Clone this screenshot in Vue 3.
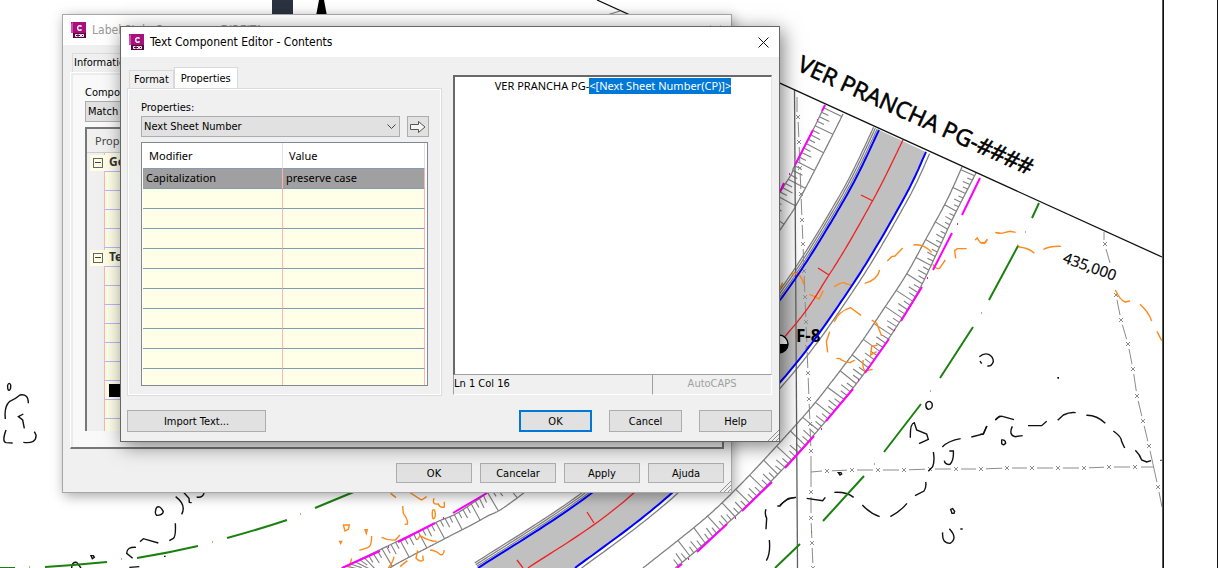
<script setup>
import { onMounted, ref } from 'vue'

/* ---------- drawing geometry ---------- */
function smooth(points, steps = 24) {
  const first = points[0]
  const last = points[points.length - 1]
  const all = [first, ...points, last]
  const out = []
  for (let i = 1; i < all.length - 2; i++) {
    const [a, b, c, d] = [all[i - 1], all[i], all[i + 1], all[i + 2]]
    for (let k = 0; k < steps; k++) {
      const t = k / steps
      out.push([0, 1].map((n) =>
        0.5 * (2 * b[n] + (c[n] - a[n]) * t + (2 * a[n] - 5 * b[n] + 4 * c[n] - d[n]) * t * t +
          (3 * b[n] - a[n] - 3 * c[n] + d[n]) * t * t * t)))
    }
  }
  out.push(last)
  return out
}
const toPath = (pts) => 'M' + pts.map((p) => p[0].toFixed(1) + ' ' + p[1].toFixed(1)).join('L')
function offset(pts, dist) {
  return pts.map((p, i) => {
    const a = pts[Math.max(0, i - 1)]
    const b = pts[Math.min(pts.length - 1, i + 1)]
    const len = Math.hypot(b[0] - a[0], b[1] - a[1]) || 1
    return [p[0] - ((b[1] - a[1]) / len) * dist, p[1] + ((b[0] - a[0]) / len) * dist]
  })
}
function ticks(base, other, start, step, group) {
  let d = ''
  let walked = 0
  let next = start
  let n = 0
  for (let i = 1; i < base.length; i++) {
    const [a, b] = [base[i - 1], base[i]]
    const len = Math.hypot(b[0] - a[0], b[1] - a[1])
    while (len && walked + len >= next) {
      const t = (next - walked) / len
      const p = [a[0] + (b[0] - a[0]) * t, a[1] + (b[1] - a[1]) * t]
      let best = other[0]
      let min = Infinity
      for (const q of other) {
        const r = Math.hypot(q[0] - p[0], q[1] - p[1])
        if (r < min) { min = r; best = q }
      }
      const share = n % group === 0 ? 1 : n % 2 ? 0.38 : 0.55
      d += toPath([p, [p[0] + (best[0] - p[0]) * share, p[1] + (best[1] - p[1]) * share]])
      n++
      next += step
    }
    walked += len
  }
  return d
}

const roadLeft = smooth([[879, 130], [844, 200], [780, 300], [694, 401], [593, 492], [478, 568]])
const roadRight = smooth([[926, 152], [903, 200], [851, 287], [782, 380], [673, 492], [575, 568]])
const roadAxis = smooth([[903, 140], [873, 200], [829, 275], [780, 342], [635, 492], [528, 568]])
const westInner = smooth([[825, 105], [813, 130], [795, 165], [780, 192], [680, 340], [488, 492], [435, 523], [400, 540], [340, 569]], 60)
const westOuter = smooth([[843, 114], [824, 152], [799, 200], [780, 230], [690, 360], [525, 492], [484, 518], [446, 538], [400, 562], [380, 574]], 60)
const eastInner = smooth([[962, 167], [947, 200], [927, 237], [906, 275], [883, 310], [860, 344], [833, 380], [809, 410], [773, 450], [738, 487], [703, 520], [643, 568]], 30)
const eastOuter = smooth([[976, 173], [952, 220], [935, 257], [919, 290], [899, 323], [878, 354], [853, 388], [813, 436], [780, 472], [742, 510], [697, 550], [675, 568]], 30)

const roadFill = toPath([...roadLeft, ...roadRight.slice().reverse()]) + 'Z'
const grayLines = [
  offset(roadLeft, 2), offset(roadLeft, 4), offset(roadLeft, 6), offset(roadRight, -4),
  westInner, westOuter, eastInner, eastOuter,
].map(toPath)
const tickPaths = [ticks(westInner, westOuter, 3, 5, 4), ticks(eastOuter, eastInner, 3, 5, 4)]

const magenta = 'M825 105L822 111M813 130L795 165M784 183L780 192M487 493L453 513M435 523L398 542M380 551L342 568' +
  'M980 178L962 215M952 233L933 270M922 287L901 321M889 339L865 373M853 389L826 421M814 436L785 468M772 482L742 511M727 524L697 552M682 564L677 568' +
  'M957 224h1M927 278h1M894 330h1M858 380h1M821 429h1M817 120h1M789 174h1M443 518h1M735 518h1M688 559h1M388 547h1'
const green = 'M1039 203L1032 218M1018 246L989 300M973 327L940 378M921 404L884 452M864 476L823 521M800 544L775 568' +
  'M0 568L15 568M45 567Q76 565 107 562M137 558Q168 553 198 546M227 538Q257 530 287 520M315 508L356 491'
const greenDots = 'M1025 232h1M981 313h1M930 391h1M874 464h1M811 532h1M29 567h1M121 559h1M212 542h1M300 514h1'

const fences = [
  [[798, 117], [799, 142], [800, 168], [801, 194], [802, 220], [803, 244], [804, 271], [805, 297], [806, 322], [807, 347], [808, 373], [809, 399], [810, 424], [811, 451], [811, 492], [811, 518], [812, 543], [813, 568]],
  [[827, 471], [852, 470], [878, 470], [904, 470], [930, 469], [956, 469], [981, 469], [1007, 468], [1032, 468], [1058, 468], [1084, 468], [1109, 467], [1135, 467]],
  [[1105, 244], [1116, 295], [1121, 320], [1128, 344], [1133, 369], [1137, 396], [1143, 421], [1149, 446], [1158, 487]],
]
let fencePath = 'M797 97V112M811 472L822 471M1104 232V240M1141 467H1154M1159 492L1162 507M1106 249L1110 263'
for (const f of fences) {
  f.forEach(([x, y], i) => {
    fencePath += `M${x - 2} ${y - 2}l4 4M${x + 2} ${y - 2}l-4 4`
    const n = f[i + 1]
    if (n && !(x === 1105)) {
      const len = Math.hypot(n[0] - x, n[1] - y)
      const ux = ((n[0] - x) / len) * 5
      const uy = ((n[1] - y) / len) * 5
      fencePath += `M${x + ux} ${y + uy}L${n[0] - ux} ${n[1] - uy}`
    }
  })
}

/* contour sketches, each tile drawn at three units per pixel */
const sketches = [
  { at: [780, 180], color: 'orange', d: 'M0 325L8 308M32 285Q45 275 58 285Q70 300 72 315M88 343L105 350L117 357L130 332M163 320Q190 302 198 311L216 316M254 310Q292 300 299 270M322 243L335 230L345 228L368 204M400 195Q430 190 455 217M458 253Q475 275 482 260L496 240M527 235L524 212L532 206H560M585 180L592 174Q600 192 612 190L622 178M646 158L660 160M163 425Q175 395 212 383L243 406M149 455L139 485L143 517M275 420L290 430L305 468M169 535L180 536Q190 545 210 548L225 540M292 495L275 500L272 525L290 515M250 540Q245 560 255 573L278 568' },
  { at: [980, 180], color: 'orange', d: 'M0 187L15 189L22 178M46 157L65 160L90 154L107 157M112 194L118 201Q150 205 163 220M190 208Q210 198 243 199M406 330Q420 360 435 366L450 363M480 373Q505 395 515 423M531 454L545 482' },
  { at: [980, 180], color: 'black', d: 'M-2 530Q12 518 26 523Q40 530 40 545Q34 560 22 558M0 543L5 551M233 594h4' },
  { at: [780, 370], color: 'black', d: 'M0 405L25 385L48 382M80 385L128 392L136 382M163 367Q200 365 221 382M247 405Q270 430 299 440M331 440Q360 425 381 400M405 377L432 363Q440 350 437 336M460 246Q465 270 458 290L445 304M487 231Q505 212 542 206M574 201L610 192L621 168M646 150L660 138M438 100Q448 88 456 100Q460 116 445 118Q436 116 438 100M391 203Q390 160 403 158L410 180L440 192L445 208L417 221M508 243L520 243Q522 270 510 283Q495 285 493 272M488 487Q485 520 510 520Q535 505 508 476M512 418l6 -2l6 8l-2 6h-6zM175 308h8l2 4l-5 3zM541 477h7' },
  { at: [980, 370], color: 'black', d: 'M0 193L10 192L20 168M46 150Q58 135 70 140L102 149M97 169Q85 195 105 200L128 197M144 167L185 167L200 154M233 151L250 135Q270 125 287 128M319 136Q350 135 376 160M400 183Q425 200 425 215L434 234M466 241Q480 255 485 270L500 276L513 272M65 210Q76 208 77 220Q70 228 65 221ZM232 23h5M541 271h4' },
  { at: [0, 370], color: 'black', d: 'M23 45Q28 35 32 45Q33 60 27 61Q22 60 23 45M16 147Q12 110 28 95Q45 88 60 75Q85 70 85 100M70 132L55 140L68 150L73 175M18 180Q5 215 18 218L38 219M70 217Q110 222 108 195L103 185M470 412Q480 405 490 425Q488 436 470 436Q462 430 470 412M527 380Q560 405 545 433M550 366L567 385L568 397L575 398M590 381Q610 385 613 366M526 460Q528 500 520 505L508 512M420 515L430 506L475 519M408 532Q380 530 380 550L398 565M273 557h7l3 5l-6 4zM215 594Q215 575 230 577L243 594M388 592L418 590M492 559h5M960 367h5' },
  { at: [0, 370], color: 'orange', d: 'M1172 370L1188 383M1030 465H1048L1045 478L1035 483ZM1095 479h7l-3 11zM1019 514h6l-3 6zM1115 498Q1115 530 1103 533L1078 541M1145 502Q1165 512 1186 510L1200 495M1055 565L1048 592M1165 594Q1180 575 1182 560' },
  { at: [400, 370], color: 'orange', d: 'M28 366Q55 385 65 390L80 380M102 385Q95 405 115 402Q120 415 133 411V395M98 420Q104 415 106 430Q106 448 99 446Q95 435 98 420M8 408L10 430Q25 450 22 462L14 463M52 510L60 497Q90 515 110 514M53 541L48 565Q60 578 70 570L68 557M90 540Q110 542 118 552Q130 560 133 540M0 590L22 572' },
  { at: [400, 370], color: 'black', d: 'M1132 408H1140Q1155 385 1187 382M1098 418Q1093 430 1100 445L1098 478M1108 510Q1112 550 1099 572' },
]

/* ---------- dialog state ---------- */
const property = ref('Next Sheet Number')
const content = ref('VER PRANCHA PG-<[Next Sheet Number(CP)]>')
const editor = ref(null)
const emptyRows = 10
const backRows = [
  { group: 'General' }, {}, {}, {}, {},
  { group: 'Text' }, {}, {}, {}, {}, {}, {}, { swatch: true }, {}, {},
]
onMounted(() => {
  editor.value.focus()
  editor.value.setSelectionRange(15, content.value.length)
})
</script>

<template>
  <main class="workspace">
    <svg class="drawing" viewBox="0 0 1218 568" preserveAspectRatio="xMinYMin slice" aria-hidden="true">
      <rect x="272" y="0" width="21" height="16" fill="#2c3340" />
      <path d="M319 0h5l3 16h-11z" fill="#000" />
      <path :d="roadFill" fill="#c0c0c0" />
      <path v-for="(d, i) in grayLines" :key="'g' + i" :d="d" class="gray" />
      <path v-for="(d, i) in tickPaths" :key="'t' + i" :d="d" class="gray tick" />
      <path d="M794.5 90L797.5 568" class="gray dark" />
      <path :d="fencePath" class="gray fence" />
      <g v-for="(s, i) in sketches" :key="'s' + i" :transform="`translate(${s.at[0]} ${s.at[1]}) scale(0.33333)`">
        <path :d="s.d" class="contour" :class="s.color" />
      </g>
      <path :d="toPath(roadAxis)" class="axis" />
      <path d="M861 195L873 201M818 268L829 275M587 512L594 523M517 560L523 568" class="axis" />
      <circle cx="779" cy="344" r="9" fill="#fff" stroke="#000" stroke-width="1.4" />
      <path d="M779 344h9a9 9 0 0 1-9 9z" fill="#000" />
      <text x="796" y="342" class="map-text bold">F-8</text>
      <path :d="toPath(roadLeft)" class="edge" />
      <path :d="toPath(roadRight)" class="edge" />
      <path :d="magenta" class="magenta" />
      <path :d="green" class="green" />
      <path :d="greenDots" class="green dot" />
      <path d="M597 0L1162 257" class="frame slanted" />
      <path d="M604 16L620 11" class="gray" />
      <path d="M1162.5 0V568" class="frame soft" />
      <path d="M1163.5 0V568M1217.5 0V568" class="frame" />
      <text transform="translate(796 70) rotate(24.4)" class="map-text large">VER PRANCHA PG-####</text>
      <text transform="translate(1062 262) rotate(20)" class="map-text">435,000</text>
    </svg>

    <section class="window back" aria-label="Label Style Composer">
      <header class="titlebar">
        <svg class="app-icon" viewBox="0 0 15 16" aria-hidden="true">
          <path d="M0 0h15v11H0z" fill="#a8117d" /><path d="M0 2l2-2v11H0z" fill="#d14fae" />
          <path d="M2 11h13v5H2z" fill="#5c0443" />
          <path d="M10.600 4.400A2.300 2.300 0 1 0 10.600 7.600" fill="none" stroke="#fff" stroke-width="1.400" />
          <path d="M6.500 12.500h-2v2h2M7.500 12.500h2v2h-2M10.500 12.500h2v2h-2z" fill="none" stroke="#fff" />
        </svg>
        <h2>Label Style Composer - DIREITA</h2>
        <button class="close" aria-label="Close">
          <svg viewBox="0 0 11 11"><path d="M0.500 0.500l10 10M10.500 0.500l-10 10" /></svg>
        </button>
      </header>
      <div class="back-body">
        <div class="back-tabs"><button class="back-tab">Information</button></div>
        <div class="back-panel">
          <label for="component">Component name:</label>
          <select id="component"><option>Match Line</option></select>
          <div class="grid-frame">
            <table class="grid">
              <colgroup><col class="gutter-col" /><col /></colgroup>
              <thead><tr><th colspan="2">Property</th></tr></thead>
              <tbody>
                <tr v-for="(row, i) in backRows" :key="i">
                  <td class="gutter">
                    <button v-if="row.group" class="expander" :aria-label="'Collapse ' + row.group"></button>
                  </td>
                  <td class="name"><b v-if="row.group">{{ row.group }}</b><span v-if="row.swatch" class="swatch"></span></td>
                </tr>
              </tbody>
            </table>
          </div>
        </div>
        <footer class="back-actions">
          <button class="btn">OK</button>
          <button class="btn">Cancelar</button>
          <button class="btn">Apply</button>
          <button class="btn">Ajuda</button>
        </footer>
      </div>
      <svg class="grip" viewBox="0 0 12 12" aria-hidden="true"><path d="M1 12L12 1M5 12L12 5M9 12L12 9" /></svg>
    </section>

    <section class="window front" role="dialog" aria-label="Text Component Editor">
      <header class="titlebar">
        <svg class="app-icon" viewBox="0 0 15 16" aria-hidden="true">
          <path d="M0 0h15v11H0z" fill="#a8117d" /><path d="M0 2l2-2v11H0z" fill="#d14fae" />
          <path d="M2 11h13v5H2z" fill="#5c0443" />
          <path d="M10.600 4.400A2.300 2.300 0 1 0 10.600 7.600" fill="none" stroke="#fff" stroke-width="1.400" />
          <path d="M6.500 12.500h-2v2h2M7.500 12.500h2v2h-2M10.500 12.500h2v2h-2z" fill="none" stroke="#fff" />
        </svg>
        <h1>Text Component Editor - Contents</h1>
        <button class="close" aria-label="Close">
          <svg viewBox="0 0 11 11"><path d="M0.500 0.500l10 10M10.500 0.500l-10 10" /></svg>
        </button>
      </header>
      <div class="front-body">
        <div class="columns">
          <div class="left">
            <div class="tabs" role="tablist">
              <button class="tab" role="tab">Format</button>
              <button class="tab active" role="tab" aria-selected="true">Properties</button>
            </div>
            <div class="panel">
              <label for="property">Properties:</label>
              <div class="picker">
                <div class="select-wrap">
                  <select id="property" v-model="property"><option>Next Sheet Number</option></select>
                  <svg class="chevron" viewBox="0 0 9 6" aria-hidden="true"><path d="M0.500 0.500l4 4l4-4" /></svg>
                </div>
                <button class="insert" aria-label="Insert property">
                  <svg viewBox="0 0 16 12"><path d="M0.500 3.500h8v-3l6.500 5.500l-6.500 5.500v-3h-8z" /></svg>
                </button>
              </div>
              <table class="modifiers">
                <colgroup><col class="modifier-col" /><col /></colgroup>
                <thead><tr><th>Modifier</th><th>Value</th></tr></thead>
                <tbody>
                  <tr class="selected"><td>Capitalization</td><td>preserve case</td></tr>
                  <tr v-for="n in emptyRows" :key="n"><td></td><td></td></tr>
                </tbody>
              </table>
            </div>
          </div>
          <div class="right">
            <textarea ref="editor" v-model="content" aria-label="Contents" spellcheck="false"></textarea>
            <div class="status"><span>Ln 1 Col 16</span><span class="caps">AutoCAPS</span></div>
          </div>
        </div>
        <footer class="actions">
          <button class="btn wide">Import Text...</button>
          <button class="btn primary">OK</button>
          <button class="btn">Cancel</button>
          <button class="btn">Help</button>
        </footer>
      </div>
      <svg class="grip" viewBox="0 0 12 12" aria-hidden="true"><path d="M1 12L12 1M5 12L12 5M9 12L12 9" /></svg>
    </section>
  </main>
</template>

<style>
body { margin: 0; overflow: hidden; }
</style>

<style scoped>
* { box-sizing: border-box; }
.workspace {
  position: relative; height: 100vh; overflow: hidden; background: #fff; color: #000;
  font: 11px/16px "DejaVu Sans Condensed", "DejaVu Sans", sans-serif;
}
button, select, textarea { font: inherit; color: inherit; margin: 0; padding: 0; border-radius: 0; }
h1, h2 { margin: 0; font: 400 12px/16px "DejaVu Sans Condensed", "DejaVu Sans", sans-serif; flex: 1; white-space: nowrap; }

.drawing { display: block; width: 100%; height: 100%; }
.gray { fill: none; stroke: #808080; stroke-width: 1.3; }
.tick { stroke-width: 1.1; }
.fence { stroke: #8c8c8c; stroke-width: 1; }
.dark { stroke: #606060; }
.edge { fill: none; stroke: #00f; stroke-width: 2; }
.axis { fill: none; stroke: #f02020; stroke-width: 1.3; }
.magenta { fill: none; stroke: #f0f; stroke-width: 2; }
.green { fill: none; stroke: #1c8010; stroke-width: 2; }
.dot { stroke-width: 1; }
.frame { fill: none; stroke: #111; stroke-width: 1; }
.slanted { stroke-width: 1.3; }
.soft { stroke: #555; }
.contour { fill: none; stroke-width: 1.4; vector-effect: non-scaling-stroke; }
.orange { stroke: #ff8a1c; }
.black { stroke: #111; }
.map-text { font: 15px "Open Sans", sans-serif; fill: #000; stroke: #000; stroke-width: 0.2; }
.map-text.large { font-size: 23px; stroke-width: 0.6; }
.map-text.bold { font-size: 17px; font-weight: 700; stroke: none; }

.window { position: absolute; display: flex; flex-direction: column; background: #f0f0f0; }
.back { left: 62px; top: 14px; width: 670px; border: 1px solid #a6a6a6; box-shadow: 2px 3px 12px rgba(0, 0, 0, .35); }
.front { left: 120px; top: 26px; width: 660px; border: 1px solid #666; box-shadow: 3px 4px 18px rgba(0, 0, 0, .5); }
.titlebar { display: flex; align-items: center; height: 30px; padding: 0 10px 0 8px; gap: 6px; background: #fff; }
.back .titlebar { color: #999; }
.app-icon { width: 15px; height: 16px; }
.close { display: flex; border: 0; background: none; }
.close svg { width: 11px; height: 11px; fill: none; stroke: #111; }
.back .close svg { stroke: #999; }
.grip { position: absolute; right: 0; bottom: 0; width: 12px; height: 12px; stroke: #909090; }

.back-body { padding: 8px 7px 9px 7px; }
.back-tabs { display: flex; padding-left: 2px; }
.back-tab { height: 19px; padding: 0 4px 0 1px; border: 1px solid #dcdcdc; border-bottom: 0; background: #f0f0f0; }
.back-panel {
  height: 377px; padding: 12px 20px 0 14px; background: #f9f9f9;
  border: 1px solid #fff; border-right: 2px solid #777; border-bottom: 2px solid #777;
  box-shadow: inset 2px 2px #ececec;
}
.back-panel label { display: block; }
.back-panel select { display: block; width: 300px; height: 21px; margin: 0 0 5px; padding: 1px 0 0 2px; appearance: none; border: 1px solid #adadad; background: #e1e1e1; }
.grid-frame { height: 304px; overflow: hidden; border: 2px solid #777; border-right-width: 1px; border-bottom: 0; background: #f0f0f0; }
.grid { width: 100%; border-collapse: separate; border-spacing: 0; table-layout: fixed; }
.gutter-col { width: 17px; }
.grid th { height: 24px; padding: 0 0 0 8px; text-align: left; font: 11px/16px "Noto Sans", sans-serif; color: #444; border-bottom: 1px solid #ccc; }
.grid td { padding: 0; height: 19px; }
.grid .name { padding-left: 4px; background: #ffffe8; border-left: 1px solid #ffb4b4; border-bottom: 1px solid #b8b8ff; font: 12px/16px "Noto Sans", sans-serif; color: #333; }
.expander { display: block; position: relative; width: 10px; height: 10px; margin-left: 6px; border: 1px solid #666; background: #ffffe8; box-shadow: 0 0 0 3px #ffffe8; }
.expander::after { content: ""; position: absolute; left: 1px; right: 1px; top: 3px; height: 1px; background: #444; }
.swatch { display: block; width: 30px; height: 13px; background: #000; }
.back-actions { display: flex; justify-content: flex-end; gap: 8px; padding-top: 14px; }

.btn { width: 73px; height: 22px; padding-top: 1px; border: 1px solid #adadad; background: #e1e1e1; text-align: center; }
.back-actions .btn { width: 76px; height: 20px; }
.btn.wide { width: 139px; margin-right: auto; }
.btn.primary { border: 2px solid #0078d7; }

.front-body { padding: 10px 7px 9px 6px; }
.columns { display: flex; gap: 11px; }
.left { width: 315px; }
.right { flex: 1; padding-top: 8px; }
.tabs { display: flex; align-items: flex-end; height: 21px; padding-left: 2px; }
.tab { height: 18px; padding: 1px 4px 0; border: 1px solid #d9d9d9; border-bottom: 0; background: #f0f0f0; }
.tab.active { height: 21px; padding: 1px 6px 0; background: #fff; }
.panel { height: 308px; padding: 11px 12px 0 13px; border: 1px solid #dcdcdc; box-shadow: inset 1px 1px #fff, inset -1px -1px #fff; }
.panel label { display: block; }
.picker { display: flex; gap: 7px; margin-bottom: 5px; }
.select-wrap { position: relative; flex: 1; }
.select-wrap select { display: block; width: 100%; height: 21px; padding: 1px 0 0 2px; appearance: none; border: 1px solid #adadad; background: #e1e1e1; }
.chevron { position: absolute; right: 4px; top: 8px; width: 9px; height: 6px; fill: none; stroke: #444; pointer-events: none; }
.insert { display: flex; align-items: center; justify-content: center; width: 22px; height: 21px; border: 1px solid #adadad; background: #e1e1e1; }
.insert svg { width: 16px; height: 12px; fill: #f4f4f4; stroke: #555; }
.modifiers { width: 287px; height: 243px; border: 1px solid #828790; border-collapse: separate; border-spacing: 0; padding: 0 2px 0 1px; table-layout: fixed; background: #fff; font: 11px/16px "Noto Sans", sans-serif; }
.modifier-col { width: 140px; }
.modifiers th { height: 26px; padding: 0 6px; text-align: left; font-weight: 400; border-right: 1px solid #e2e2e2; border-bottom: 1px solid #7f9db9; }
.modifiers td { height: 20px; padding: 0 3px 1px; background: #ffffe8; border-right: 1px solid #ffb4b4; border-bottom: 1px solid #7f9db9; }
.modifiers tr:last-child td { height: 16px; }
.modifiers tbody tr:last-child td { border-bottom: 0; }
.modifiers thead th { height: 26px; }
.modifiers .selected td { background: #a0a0a0; }
textarea {
  display: block; width: 100%; height: 300px; padding: 1px 4px 0; resize: none; outline: 0; overflow: hidden; background: #fff;
  border: 2px solid #696969; border-right: 1px solid #e3e3e3; border-bottom: 1px solid #a0a0a0; text-align: center;
  font-family: "Noto Sans", sans-serif; white-space: nowrap;
}
textarea::selection { background: #0078d7; color: #fff; }
.status { display: flex; height: 20px; }
.status span { flex: 200; line-height: 18px; border-left: 1px solid #a0a0a0; border-bottom: 1px solid #fff; }
.status .caps { flex: 119; text-align: center; color: #a0a0a0; border-right: 1px solid #fff; }
.actions { display: flex; gap: 17px; padding-top: 14px; }
</style>
